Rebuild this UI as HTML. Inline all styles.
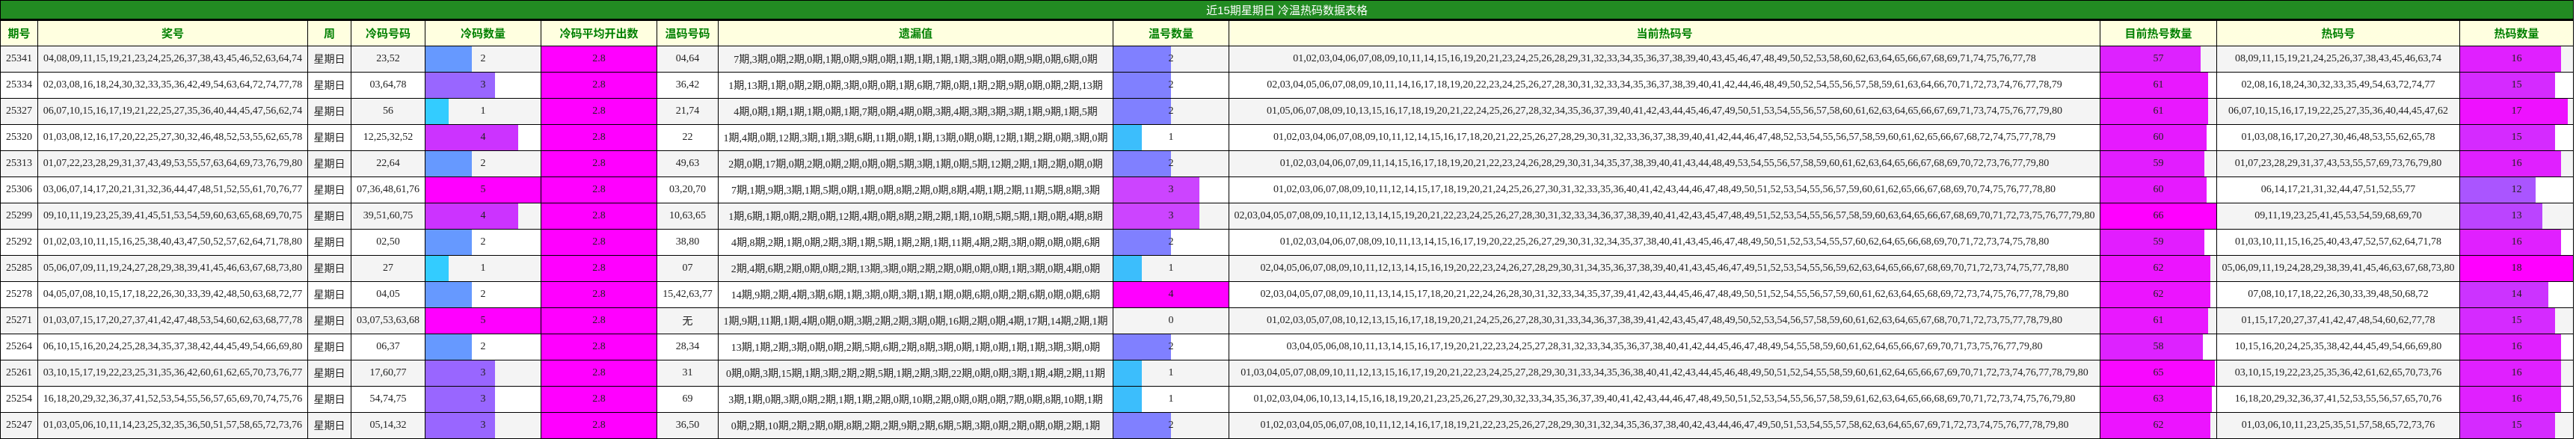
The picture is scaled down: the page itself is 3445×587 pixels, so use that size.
<!DOCTYPE html>
<html><head><meta charset="utf-8">
<style>
html,body{margin:0;padding:0;background:#fff;width:3445px;height:587px;overflow:hidden}
table{border-collapse:collapse;table-layout:fixed;width:3441px;font-family:"Liberation Serif","Noto Sans CJK SC",serif;font-size:14px;color:#222}
td{border:1px solid #000;padding:0;text-align:center;white-space:nowrap;overflow:hidden;height:34px}
tr.t td{height:24px;background:#228B22;color:#fff;font-family:"Liberation Sans","Noto Sans CJK SC",sans-serif;font-size:15px;border-bottom:3px solid #000}
tr.h td{height:33px;background:#ffffe0;color:#008000;font-weight:bold;font-family:"Liberation Sans","Noto Sans CJK SC",sans-serif;font-size:15px}
tr.g td{background:#f4f4f4}
tr.w td{background:#fff}
td.b{position:relative}
td.b i{position:absolute;left:0;top:0;bottom:0;display:block}
td.b span{position:relative}
tr td.m{background:#ff00ff}
</style></head><body>
<table>
<colgroup><col style="width:50px"><col style="width:361px"><col style="width:58px"><col style="width:99px"><col style="width:155px"><col style="width:155px"><col style="width:82px"><col style="width:528px"><col style="width:155px"><col style="width:1165px"><col style="width:156px"><col style="width:325px"><col style="width:152px"></colgroup>
<tr class="t"><td colspan="13">近15期星期日 冷温热码数据表格</td></tr>
<tr class="h"><td>期号</td><td>奖号</td><td>周</td><td>冷码号码</td><td>冷码数量</td><td>冷码平均开出数</td><td>温码号码</td><td>遗漏值</td><td>温号数量</td><td>当前热码号</td><td>目前热号数量</td><td>热码号</td><td>热码数量</td></tr>

<tr class="g"><td>25341</td><td>04,08,09,11,15,19,21,23,24,25,26,37,38,43,45,46,52,63,64,74</td><td>星期日</td><td>23,52</td><td class="b"><i style="width:62px;background:#6699ff"></i><span>2</span></td><td class="m">2.8</td><td>04,64</td><td>7期,3期,0期,2期,0期,1期,0期,9期,0期,1期,1期,1期,1期,3期,0期,0期,9期,0期,6期,0期</td><td class="b"><i style="width:77px;background:#8080ff"></i><span>2</span></td><td>01,02,03,04,06,07,08,09,10,11,14,15,16,19,20,21,23,24,25,26,28,29,31,32,33,34,35,36,37,38,39,40,43,45,46,47,48,49,50,52,53,58,60,62,63,64,65,66,67,68,69,71,74,75,76,77,78</td><td class="b"><i style="width:134px;background:#dd22ff"></i><span>57</span></td><td>08,09,11,15,19,21,24,25,26,37,38,43,45,46,63,74</td><td class="b"><i style="width:135px;background:#e020ff"></i><span>16</span></td></tr>

<tr class="w"><td>25334</td><td>02,03,08,16,18,24,30,32,33,35,36,42,49,54,63,64,72,74,77,78</td><td>星期日</td><td>03,64,78</td><td class="b"><i style="width:93px;background:#9966ff"></i><span>3</span></td><td class="m">2.8</td><td>36,42</td><td>1期,13期,1期,0期,2期,0期,3期,0期,0期,1期,6期,7期,0期,1期,2期,9期,0期,0期,2期,13期</td><td class="b"><i style="width:77px;background:#8080ff"></i><span>2</span></td><td>02,03,04,05,06,07,08,09,10,11,14,16,17,18,19,20,22,23,24,25,26,27,28,30,31,32,33,34,35,36,37,38,39,40,41,42,44,46,48,49,50,52,54,55,56,57,58,59,61,63,64,66,70,71,72,73,74,76,77,78,79</td><td class="b"><i style="width:144px;background:#e918ff"></i><span>61</span></td><td>02,08,16,18,24,30,32,33,35,49,54,63,72,74,77</td><td class="b"><i style="width:127px;background:#d52aff"></i><span>15</span></td></tr>

<tr class="g"><td>25327</td><td>06,07,10,15,16,17,19,21,22,25,27,35,36,40,44,45,47,56,62,74</td><td>星期日</td><td>56</td><td class="b"><i style="width:31px;background:#33ccff"></i><span>1</span></td><td class="m">2.8</td><td>21,74</td><td>4期,0期,1期,1期,1期,0期,1期,7期,0期,4期,0期,3期,4期,3期,3期,3期,1期,9期,1期,5期</td><td class="b"><i style="width:77px;background:#8080ff"></i><span>2</span></td><td>01,05,06,07,08,09,10,13,15,16,17,18,19,20,21,22,24,25,26,27,28,32,34,35,36,37,39,40,41,42,43,44,45,46,47,49,50,51,53,54,55,56,57,58,60,61,62,63,64,65,66,67,69,71,73,74,75,76,77,79,80</td><td class="b"><i style="width:144px;background:#e918ff"></i><span>61</span></td><td>06,07,10,15,16,17,19,22,25,27,35,36,40,44,45,47,62</td><td class="b"><i style="width:144px;background:#ee11ff"></i><span>17</span></td></tr>

<tr class="w"><td>25320</td><td>01,03,08,12,16,17,20,22,25,27,30,32,46,48,52,53,55,62,65,78</td><td>星期日</td><td>12,25,32,52</td><td class="b"><i style="width:124px;background:#cc33ff"></i><span>4</span></td><td class="m">2.8</td><td>22</td><td>1期,4期,0期,12期,3期,1期,3期,6期,11期,0期,1期,13期,0期,0期,12期,1期,2期,0期,3期,0期</td><td class="b"><i style="width:38px;background:#3cbefc"></i><span>1</span></td><td>01,02,03,04,06,07,08,09,10,11,12,14,15,16,17,18,20,21,22,25,26,27,28,29,30,31,32,33,36,37,38,39,40,41,42,44,46,47,48,52,53,54,55,56,57,58,59,60,61,62,65,66,67,68,72,74,75,77,78,79</td><td class="b"><i style="width:142px;background:#e61aff"></i><span>60</span></td><td>01,03,08,16,17,20,27,30,46,48,53,55,62,65,78</td><td class="b"><i style="width:127px;background:#d52aff"></i><span>15</span></td></tr>

<tr class="g"><td>25313</td><td>01,07,22,23,28,29,31,37,43,49,53,55,57,63,64,69,73,76,79,80</td><td>星期日</td><td>22,64</td><td class="b"><i style="width:62px;background:#6699ff"></i><span>2</span></td><td class="m">2.8</td><td>49,63</td><td>2期,0期,17期,0期,2期,0期,2期,0期,0期,5期,3期,1期,0期,5期,12期,2期,1期,2期,0期,0期</td><td class="b"><i style="width:77px;background:#8080ff"></i><span>2</span></td><td>01,02,03,04,06,07,09,11,14,15,16,17,18,19,20,21,22,23,24,26,28,29,30,31,34,35,37,38,39,40,41,43,44,48,49,53,54,55,56,57,58,59,60,61,62,63,64,65,66,67,68,69,70,72,73,76,77,79,80</td><td class="b"><i style="width:139px;background:#e21dff"></i><span>59</span></td><td>01,07,23,28,29,31,37,43,53,55,57,69,73,76,79,80</td><td class="b"><i style="width:135px;background:#e020ff"></i><span>16</span></td></tr>

<tr class="w"><td>25306</td><td>03,06,07,14,17,20,21,31,32,36,44,47,48,51,52,55,61,70,76,77</td><td>星期日</td><td>07,36,48,61,76</td><td class="b"><i style="width:155px;background:#ff00ff"></i><span>5</span></td><td class="m">2.8</td><td>03,20,70</td><td>7期,1期,9期,3期,1期,5期,0期,1期,0期,8期,2期,0期,8期,4期,1期,2期,11期,5期,8期,3期</td><td class="b"><i style="width:115px;background:#cc44ff"></i><span>3</span></td><td>01,02,03,06,07,08,09,10,11,12,14,15,17,18,19,20,21,24,25,26,27,30,31,32,33,35,36,40,41,42,43,44,46,47,48,49,50,51,52,53,54,55,56,57,59,60,61,62,65,66,67,68,69,70,74,75,76,77,78,80</td><td class="b"><i style="width:142px;background:#e61aff"></i><span>60</span></td><td>06,14,17,21,31,32,44,47,51,52,55,77</td><td class="b"><i style="width:101px;background:#aa55ff"></i><span>12</span></td></tr>

<tr class="g"><td>25299</td><td>09,10,11,19,23,25,39,41,45,51,53,54,59,60,63,65,68,69,70,75</td><td>星期日</td><td>39,51,60,75</td><td class="b"><i style="width:124px;background:#cc33ff"></i><span>4</span></td><td class="m">2.8</td><td>10,63,65</td><td>1期,6期,1期,0期,2期,0期,12期,4期,0期,8期,2期,2期,1期,10期,5期,5期,1期,0期,4期,8期</td><td class="b"><i style="width:115px;background:#cc44ff"></i><span>3</span></td><td>02,03,04,05,07,08,09,10,11,12,13,14,15,19,20,21,22,23,24,25,26,27,28,30,31,32,33,34,36,37,38,39,40,41,42,43,45,47,48,49,51,52,53,54,55,56,57,58,59,60,63,64,65,66,67,68,69,70,71,72,73,75,76,77,79,80</td><td class="b"><i style="width:156px;background:#ff00ff"></i><span>66</span></td><td>09,11,19,23,25,41,45,53,54,59,68,69,70</td><td class="b"><i style="width:110px;background:#bb44ff"></i><span>13</span></td></tr>

<tr class="w"><td>25292</td><td>01,02,03,10,11,15,16,25,38,40,43,47,50,52,57,62,64,71,78,80</td><td>星期日</td><td>02,50</td><td class="b"><i style="width:62px;background:#6699ff"></i><span>2</span></td><td class="m">2.8</td><td>38,80</td><td>4期,8期,2期,1期,0期,2期,3期,1期,5期,1期,2期,1期,11期,4期,2期,3期,0期,0期,0期,6期</td><td class="b"><i style="width:77px;background:#8080ff"></i><span>2</span></td><td>01,02,03,04,06,07,08,09,10,11,13,14,15,16,17,19,20,22,25,26,27,29,30,31,32,34,35,37,38,40,41,43,45,46,47,48,49,50,51,52,53,54,55,57,60,62,64,65,66,68,69,70,71,72,73,74,75,78,80</td><td class="b"><i style="width:139px;background:#e21dff"></i><span>59</span></td><td>01,03,10,11,15,16,25,40,43,47,52,57,62,64,71,78</td><td class="b"><i style="width:135px;background:#e020ff"></i><span>16</span></td></tr>

<tr class="g"><td>25285</td><td>05,06,07,09,11,19,24,27,28,29,38,39,41,45,46,63,67,68,73,80</td><td>星期日</td><td>27</td><td class="b"><i style="width:31px;background:#33ccff"></i><span>1</span></td><td class="m">2.8</td><td>07</td><td>2期,4期,6期,2期,0期,0期,2期,13期,3期,0期,2期,2期,0期,0期,0期,1期,3期,0期,4期,0期</td><td class="b"><i style="width:38px;background:#3cbefc"></i><span>1</span></td><td>02,04,05,06,07,08,09,10,11,12,13,14,15,16,19,20,22,23,24,26,27,28,29,30,31,34,35,36,37,38,39,40,41,43,45,46,47,49,51,52,53,54,55,56,59,62,63,64,65,66,67,68,69,70,71,72,73,74,75,77,78,80</td><td class="b"><i style="width:147px;background:#ec14ff"></i><span>62</span></td><td>05,06,09,11,19,24,28,29,38,39,41,45,46,63,67,68,73,80</td><td class="b"><i style="width:152px;background:#ff00ff"></i><span>18</span></td></tr>

<tr class="w"><td>25278</td><td>04,05,07,08,10,15,17,18,22,26,30,33,39,42,48,50,63,68,72,77</td><td>星期日</td><td>04,05</td><td class="b"><i style="width:62px;background:#6699ff"></i><span>2</span></td><td class="m">2.8</td><td>15,42,63,77</td><td>14期,9期,2期,4期,3期,6期,1期,3期,0期,3期,1期,1期,0期,6期,0期,2期,6期,0期,0期,6期</td><td class="b"><i style="width:155px;background:#ff00ff"></i><span>4</span></td><td>02,03,04,05,07,08,09,10,11,13,14,15,17,18,20,21,22,24,26,28,30,31,32,33,34,35,37,39,41,42,43,44,45,46,47,48,49,50,51,52,54,55,56,57,59,60,61,62,63,64,65,68,69,72,73,74,75,76,77,78,79,80</td><td class="b"><i style="width:147px;background:#ec14ff"></i><span>62</span></td><td>07,08,10,17,18,22,26,30,33,39,48,50,68,72</td><td class="b"><i style="width:118px;background:#cc33ff"></i><span>14</span></td></tr>

<tr class="g"><td>25271</td><td>01,03,07,15,17,20,27,37,41,42,47,48,53,54,60,62,63,68,77,78</td><td>星期日</td><td>03,07,53,63,68</td><td class="b"><i style="width:155px;background:#ff00ff"></i><span>5</span></td><td class="m">2.8</td><td>无</td><td>1期,9期,11期,1期,4期,0期,0期,3期,2期,2期,3期,0期,16期,2期,0期,4期,17期,14期,2期,1期</td><td class="b"><span>0</span></td><td>01,02,03,05,07,08,10,12,13,15,16,17,18,19,20,21,24,25,26,27,28,30,31,33,34,36,37,38,39,41,42,43,45,47,48,49,50,52,53,54,56,57,58,59,60,61,62,63,64,65,67,68,70,71,72,73,75,77,78,79,80</td><td class="b"><i style="width:144px;background:#e918ff"></i><span>61</span></td><td>01,15,17,20,27,37,41,42,47,48,54,60,62,77,78</td><td class="b"><i style="width:127px;background:#d52aff"></i><span>15</span></td></tr>

<tr class="w"><td>25264</td><td>06,10,15,16,20,24,25,28,34,35,37,38,42,44,45,49,54,66,69,80</td><td>星期日</td><td>06,37</td><td class="b"><i style="width:62px;background:#6699ff"></i><span>2</span></td><td class="m">2.8</td><td>28,34</td><td>13期,1期,2期,3期,0期,0期,2期,5期,6期,2期,8期,3期,0期,1期,0期,1期,1期,3期,3期,0期</td><td class="b"><i style="width:77px;background:#8080ff"></i><span>2</span></td><td>03,04,05,06,08,10,11,13,14,15,16,17,19,20,21,22,23,24,25,27,28,31,32,33,34,35,36,37,38,40,41,42,44,45,46,47,48,49,54,55,58,59,60,61,62,64,65,66,67,69,70,71,73,75,76,77,79,80</td><td class="b"><i style="width:137px;background:#dd22ff"></i><span>58</span></td><td>10,15,16,20,24,25,35,38,42,44,45,49,54,66,69,80</td><td class="b"><i style="width:135px;background:#e020ff"></i><span>16</span></td></tr>

<tr class="g"><td>25261</td><td>03,10,15,17,19,22,23,25,31,35,36,42,60,61,62,65,70,73,76,77</td><td>星期日</td><td>17,60,77</td><td class="b"><i style="width:93px;background:#9966ff"></i><span>3</span></td><td class="m">2.8</td><td>31</td><td>0期,0期,3期,15期,1期,3期,2期,2期,5期,1期,2期,3期,22期,0期,0期,3期,1期,4期,2期,11期</td><td class="b"><i style="width:38px;background:#3cbefc"></i><span>1</span></td><td>01,03,04,05,07,08,09,10,11,12,13,15,16,17,19,20,21,22,23,24,25,27,28,29,30,31,33,34,35,36,38,40,41,42,43,44,45,46,48,49,50,51,52,54,55,58,59,60,61,62,64,65,66,67,69,70,71,72,73,74,76,77,78,79,80</td><td class="b"><i style="width:153px;background:#f808ff"></i><span>65</span></td><td>03,10,15,19,22,23,25,35,36,42,61,62,65,70,73,76</td><td class="b"><i style="width:135px;background:#e020ff"></i><span>16</span></td></tr>

<tr class="w"><td>25254</td><td>16,18,20,29,32,36,37,41,52,53,54,55,56,57,65,69,70,74,75,76</td><td>星期日</td><td>54,74,75</td><td class="b"><i style="width:93px;background:#9966ff"></i><span>3</span></td><td class="m">2.8</td><td>69</td><td>3期,1期,0期,3期,0期,2期,1期,1期,2期,0期,10期,2期,0期,0期,0期,7期,0期,8期,10期,1期</td><td class="b"><i style="width:38px;background:#3cbefc"></i><span>1</span></td><td>01,02,03,04,06,10,13,14,15,16,18,19,20,21,23,25,26,27,29,30,32,33,34,35,36,37,39,40,41,42,43,44,46,47,48,49,50,51,52,53,54,55,56,57,58,59,61,62,63,64,65,66,68,69,70,71,72,73,74,75,76,79,80</td><td class="b"><i style="width:149px;background:#f010ff"></i><span>63</span></td><td>16,18,20,29,32,36,37,41,52,53,55,56,57,65,70,76</td><td class="b"><i style="width:135px;background:#e020ff"></i><span>16</span></td></tr>

<tr class="g"><td>25247</td><td>01,03,05,06,10,11,14,23,25,32,35,36,50,51,57,58,65,72,73,76</td><td>星期日</td><td>05,14,32</td><td class="b"><i style="width:93px;background:#9966ff"></i><span>3</span></td><td class="m">2.8</td><td>36,50</td><td>0期,2期,10期,2期,2期,0期,8期,2期,2期,9期,2期,6期,5期,3期,0期,2期,0期,0期,2期,1期</td><td class="b"><i style="width:77px;background:#8080ff"></i><span>2</span></td><td>01,02,03,04,05,06,07,08,10,11,12,14,16,17,18,19,21,22,23,25,26,27,28,29,30,31,32,34,35,36,37,38,40,42,43,44,46,47,49,50,51,53,54,55,57,58,62,63,64,65,67,69,71,72,73,74,75,76,77,78,79,80</td><td class="b"><i style="width:147px;background:#ec14ff"></i><span>62</span></td><td>01,03,06,10,11,23,25,35,51,57,58,65,72,73,76</td><td class="b"><i style="width:127px;background:#d52aff"></i><span>15</span></td></tr>
</table>
</body></html>
